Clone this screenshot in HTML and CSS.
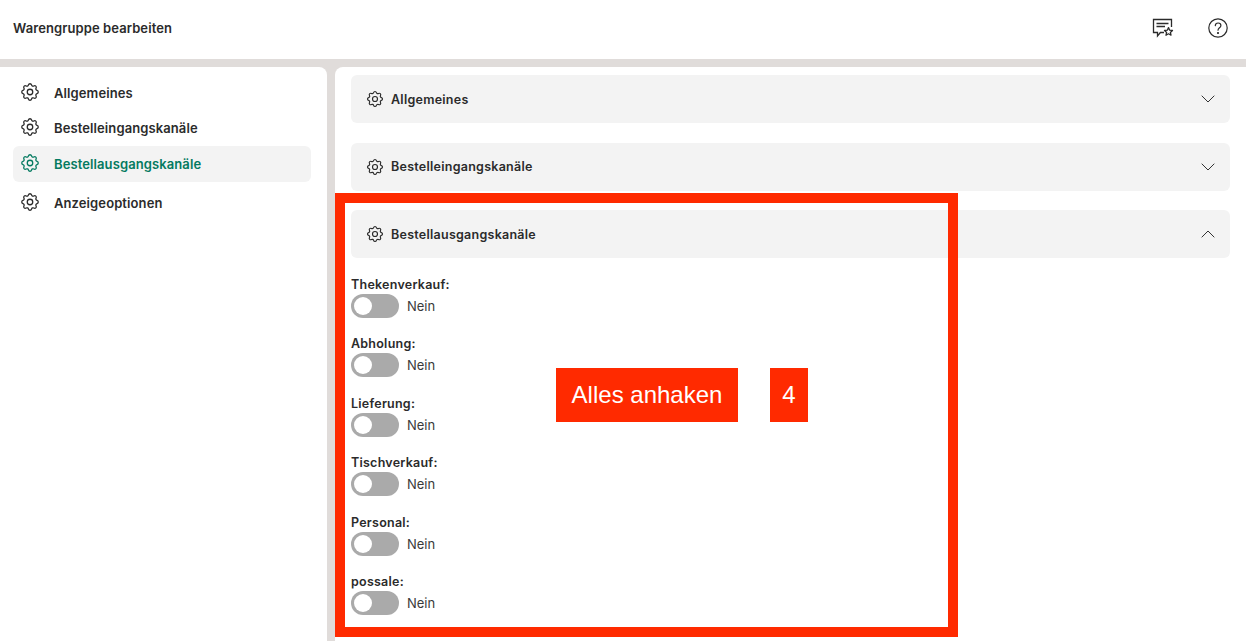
FILE: index.html
```html
<!DOCTYPE html>
<html lang="de">
<head>
<meta charset="utf-8">
<title>Warengruppe bearbeiten</title>
<link rel="stylesheet" href="styles.css">
</head>
<body>
<svg class="defs" width="0" height="0" aria-hidden="true">
  <symbol id="gear" viewBox="0 0 24 24" fill="none" stroke="currentColor" stroke-width="1.4" stroke-linecap="round" stroke-linejoin="round">
    <path d="M10.325 4.317c.426 -1.756 2.924 -1.756 3.35 0a1.724 1.724 0 0 0 2.573 1.066c1.543 -.94 3.31 .826 2.37 2.37a1.724 1.724 0 0 0 1.065 2.572c1.756 .426 1.756 2.924 0 3.35a1.724 1.724 0 0 0 -1.066 2.573c.94 1.543 -.826 3.31 -2.37 2.37a1.724 1.724 0 0 0 -2.572 1.065c-.426 1.756 -2.924 1.756 -3.35 0a1.724 1.724 0 0 0 -2.573 -1.066c-1.543 .94 -3.31 -.826 -2.37 -2.37a1.724 1.724 0 0 0 -1.065 -2.572c-1.756 -.426 -1.756 -2.924 0 -3.35a1.724 1.724 0 0 0 1.066 -2.573c-.94 -1.543 .826 -3.31 2.37 -2.37c1 .608 2.296 .07 2.572 -1.065z"/>
    <circle cx="12" cy="12" r="3"/>
  </symbol>
</svg>
<div class="page">
  <header class="topbar">
    <h1 class="title">Warengruppe bearbeiten</h1>
    <div class="top-icons">
      <svg class="top-icon" viewBox="0 0 22 20" fill="none" stroke="#2b2b2b" stroke-width="1.3">
        <path d="M12 14.5H8.4L5.5 18V14.5H1.5V1.5H19.5V9"/>
        <path d="M4.5 5.5H16.5M4.5 8.5H13"/>
        <path d="M16.5 9.6l1.2 2.6 2.8.3-2.1 1.9.6 2.8-2.5-1.4-2.5 1.4.6-2.8-2.1-1.9 2.8-.3z" stroke-linejoin="round"/>
      </svg>
      <svg class="top-icon help" viewBox="0 0 20 20" fill="none" stroke="#2b2b2b" stroke-width="1.2">
        <circle cx="10" cy="10" r="9.2"/>
        <path d="M7.3 7.6C7.4 6 8.6 5 10.1 5c1.6 0 2.8 1 2.8 2.4 0 2.3-2.9 2.4-2.9 4.8" stroke-linecap="round"/>
        <circle cx="10" cy="15" r=".5" fill="#2b2b2b"/>
      </svg>
    </div>
  </header>
  <div class="content">
    <nav class="sidebar">
      <a class="nav-item"><svg class="nav-icon"><use href="#gear"/></svg>Allgemeines</a>
      <a class="nav-item"><svg class="nav-icon"><use href="#gear"/></svg>Bestelleingangskanäle</a>
      <a class="nav-item active"><svg class="nav-icon"><use href="#gear"/></svg>Bestellausgangskanäle</a>
      <a class="nav-item"><svg class="nav-icon"><use href="#gear"/></svg>Anzeigeoptionen</a>
    </nav>
    <main class="main">
      <section class="acc">
        <div class="acc-head">
          <svg class="acc-icon"><use href="#gear"/></svg><span class="acc-title">Allgemeines</span>
          <svg class="chev" viewBox="0 0 14 8" fill="none" stroke="#333" stroke-width="1"><path d="M.7.7 7 7 13.3.7"/></svg>
        </div>
      </section>
      <section class="acc">
        <div class="acc-head">
          <svg class="acc-icon"><use href="#gear"/></svg><span class="acc-title">Bestelleingangskanäle</span>
          <svg class="chev" viewBox="0 0 14 8" fill="none" stroke="#333" stroke-width="1"><path d="M.7.7 7 7 13.3.7"/></svg>
        </div>
      </section>
      <section class="acc open">
        <div class="acc-head">
          <svg class="acc-icon"><use href="#gear"/></svg><span class="acc-title">Bestellausgangskanäle</span>
          <svg class="chev" viewBox="0 0 14 8" fill="none" stroke="#333" stroke-width="1"><path d="M.7 7.3 7 1l6.3 6.3"/></svg>
        </div>
        <div class="fields">
          <div class="field"><div class="label">Thekenverkauf:</div><div class="control"><span class="toggle"></span><span class="state">Nein</span></div></div>
          <div class="field"><div class="label">Abholung:</div><div class="control"><span class="toggle"></span><span class="state">Nein</span></div></div>
          <div class="field"><div class="label">Lieferung:</div><div class="control"><span class="toggle"></span><span class="state">Nein</span></div></div>
          <div class="field"><div class="label">Tischverkauf:</div><div class="control"><span class="toggle"></span><span class="state">Nein</span></div></div>
          <div class="field"><div class="label">Personal:</div><div class="control"><span class="toggle"></span><span class="state">Nein</span></div></div>
          <div class="field"><div class="label">possale:</div><div class="control"><span class="toggle"></span><span class="state">Nein</span></div></div>
        </div>
      </section>
      <div class="mark-box"></div>
      <div class="mark-label mark-text">Alles anhaken</div>
      <div class="mark-label mark-num">4</div>
    </main>
  </div>
</div>
</body>
</html>
```
FILE: styles.css
```css
* { box-sizing: border-box; }
html, body { margin: 0; height: 100%; }
body {
  font-family: Inter, "Liberation Sans", sans-serif;
  color: #2b2b2b;
  background: #e0dcda;
  overflow: hidden;
}
.defs { position: absolute; }
.page { display: flex; flex-direction: column; height: 641px; }
.topbar {
  height: 59px;
  flex: none;
  background: #fff;
  display: flex;
  align-items: center;
  justify-content: space-between;
  padding: 0 18px 3px 13px;
}
.title { margin: 0; font-size: 13px; font-weight: 600; line-height: 20px; letter-spacing: .09px; }
.top-icons { display: flex; align-items: center; gap: 34px; }
.top-icon { width: 22px; height: 20px; display: block; }
.top-icon.help { width: 20px; }
.content { flex: 1; display: flex; gap: 8px; padding-top: 8px; min-height: 0; }
.sidebar {
  width: 327px;
  flex: none;
  background: #fff;
  border-top-right-radius: 8px;
  padding: 8px 16px 0 13px;
}
.nav-item {
  height: 36px;
  display: flex;
  align-items: center;
  padding-left: 6px;
  gap: 13px;
  font-size: 13px;
  font-weight: 600;
  letter-spacing: .1px;
  border-radius: 6px;
}
.nav-item:first-child { margin-bottom: -1px; }
.nav-item.active { background: #f3f3f3; color: #047a60; margin-bottom: 3px; }
.nav-icon { width: 22px; height: 22px; flex: none; position: relative; top: -1px; }
.main {
  flex: 1;
  position: relative;
  background: #fff;
  border-top-left-radius: 8px;
  padding: 8px 16px 0;
}
.acc { margin-bottom: 19.5px; }
.acc-head {
  height: 48px;
  background: #f3f3f3;
  border-radius: 6px;
  display: flex;
  align-items: center;
  padding: 0 16px 0 14px;
}
.acc-icon { width: 20px; height: 20px; flex: none; margin-right: 6px; }
.acc-title { font-size: 12.5px; font-weight: 600; letter-spacing: .26px; flex: 1; }
.chev { width: 14px; height: 8px; flex: none; margin-right: -1px; }
.fields { padding-top: 16.6px; }
.field { height: 59.5px; }
.label { font-size: 12.5px; font-weight: 600; line-height: 19px; letter-spacing: .24px; }
.control { display: flex; align-items: center; gap: 8px; }
.toggle {
  width: 48px;
  height: 24px;
  border-radius: 12px;
  background: #aaa;
  padding: 3px 0 0 3px;
  display: block;
}
.toggle::before {
  content: "";
  display: block;
  width: 18px;
  height: 18px;
  border-radius: 50%;
  background: #fff;
}
.state { font-size: 13px; color: #3a3a3a; }
.mark-box {
  position: absolute;
  left: 0;
  top: 126px;
  width: 623px;
  height: 444px;
  border: 10px solid #ff2a00;
}
.mark-label {
  position: absolute;
  top: 301px;
  height: 54px;
  background: #ff2a00;
  color: #fff;
  font-family: "Liberation Sans", Arial, sans-serif;
  font-size: 24px;
  display: flex;
  align-items: center;
  justify-content: center;
}
.mark-text { left: 221px; width: 182px; }
.mark-num { left: 435px; width: 38px; }
```
